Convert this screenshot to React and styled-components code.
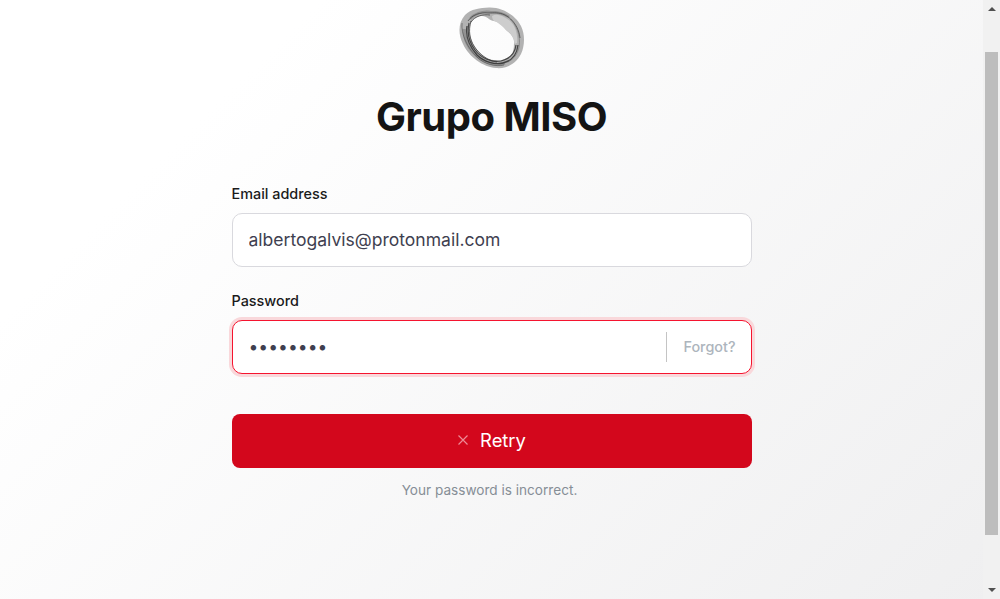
import React from 'react';
import styled, { createGlobalStyle } from 'styled-components';

const GlobalStyle = createGlobalStyle`
  html, body {
    margin: 0;
    padding: 0;
    height: 100%;
    overflow: hidden;
  }
  body {
    font-family: Inter, "Liberation Sans", sans-serif;
  }
`;

function Logo() {
  return (
    <LogoSvg viewBox="0 0 66 62" width="66" height="62" fill="none">
      <path
        fillRule="evenodd"
        fill="#b2b2b2"
        d="M30 0.5 C44 0 57 9 62 19 C66 27 66 38 62 47 C57 57 47 62 37 61 C24 60 10 50 4 37 C-1 27 -1 16 6 8 C12 2 21 1 30 0.5 Z
           M12 16 C15 11 19 9 23 9 C28 9 31 14 35 14 C41 15 45 20 47 23 C52 27 56 31 55 36 C55 42 54 46 52 48 C48 52 42 54 37 53 C31 53 26 51 23 48 C18 44 15 39 13 34 C10 27 10 21 12 16 Z"
      />
      <path fill="#cdcdcd" d="M33 9 C38 6 44 9 50 13 C56 18 59 26 58 36 L55.5 37 C55 31 52 26 47 23 C43 19 39 15 35 14 C34 13 33 11 33 9 Z" />
      <path stroke="#555" strokeWidth="3" opacity="0.35" d="M5 22 C5 32 10 42 18 49 C26 56 37 59 46 56" />
      <path stroke="#444" strokeWidth="2.5" opacity="0.3" d="M11 12 C15 7 23 4 31 5 C38 5 44 6 50 10" />
      <path stroke="#2b2b2b" strokeWidth="1.3" opacity="0.8" d="M8 19 C6 30 11 40 18 48 C25 55 36 58 44 56 C53 54 58 47 59 38" />
      <path stroke="#2b2b2b" strokeWidth="1.2" opacity="0.8" d="M10 16 C8 25 10 35 16 43 C22 51 33 56 42 54 C50 52 56 47 57 38" />
      <path stroke="#3a3a3a" strokeWidth="1" opacity="0.75" d="M12 14 C9 24 11 33 15 39 C20 47 29 54 38 55" />
      <path stroke="#3c3c3c" strokeWidth="1" opacity="0.7" d="M9 14 C13 8 21 5 29 6 C35 6 40 5 46 8 C54 12 60 21 61 31" />
      <path stroke="#444" strokeWidth="1" opacity="0.75" d="M12 15 C16 9 24 7 31 8" />
      <path stroke="#555" strokeWidth="1" opacity="0.65" d="M3 16 C2 27 8 41 19 51 C26 57 36 60 45 58" />
      <path stroke="#666" strokeWidth="1" opacity="0.55" d="M51 12 C57 17 62 28 60 40 C59 46 55 52 49 55" />
    </LogoSvg>
  );
}

function RetryIcon() {
  return (
    <svg width="10" height="10" viewBox="0 0 10 10" fill="none" stroke="#ee8a96" strokeWidth="1.2">
      <path d="M0.5 0.5 L9.5 9.5 M9.5 0.5 L0.5 9.5" />
    </svg>
  );
}

export default function App() {
  return (
    <Page>
      <GlobalStyle />
      <Main>
        <Logo />
        <Title>Grupo MISO</Title>
        <Form onSubmit={(e) => e.preventDefault()}>
          <Field>
            <Label>Email address</Label>
            <InputBox>
              <Input type="email" defaultValue="albertogalvis@protonmail.com" />
            </InputBox>
          </Field>
          <Field>
            <Label>Password</Label>
            <InputBox $error>
              <Input type="password" defaultValue="12345678" />
              <Forgot>Forgot?</Forgot>
            </InputBox>
          </Field>
          <RetryButton type="submit">
            <RetryIcon />
            Retry
          </RetryButton>
          <ErrorText>Your password is incorrect.</ErrorText>
        </Form>
      </Main>
      <ScrollBar>
        <ArrowUp />
        <Thumb />
        <ArrowDown />
      </ScrollBar>
    </Page>
  );
}

const Page = styled.div`
  display: flex;
  width: 100%;
  height: 100vh;
  overflow: hidden;
  background: linear-gradient(135deg, #ffffff 20%, #efeff0 100%);
`;

const Main = styled.main`
  flex: 1;
  display: flex;
  flex-direction: column;
  align-items: center;
  padding-top: 7px;
`;

const LogoSvg = styled.svg`
  display: block;
  flex-shrink: 0;
  overflow: visible;
  filter: blur(0.4px);
`;

const Title = styled.h1`
  margin: 20px 0 0;
  font-size: 40px;
  line-height: 56px;
  font-weight: 700;
  letter-spacing: -0.5px;
  color: #141414;
`;

const Form = styled.form`
  width: 520px;
  margin-top: 39px;
  display: flex;
  flex-direction: column;
`;

const Field = styled.div`
  display: flex;
  flex-direction: column;
  margin-bottom: 24px;
`;

const Label = styled.label`
  font-size: 14.4px;
  line-height: 20px;
  font-weight: 500;
  color: #1a1a1a;
  margin-bottom: 9px;
`;

const InputBox = styled.div`
  box-sizing: border-box;
  height: 54px;
  display: flex;
  align-items: center;
  background: #ffffff;
  border-radius: 10px;
  border: ${(p) => (p.$error ? '1.5px solid #f5142f' : '1px solid #d9d9de')};
  box-shadow: ${(p) => (p.$error ? '0 0 0 3px #f9d8db' : 'none')};
`;

const Input = styled.input`
  flex: 1;
  min-width: 0;
  height: 100%;
  box-sizing: border-box;
  padding: 0 16px 2px;
  border: none;
  outline: none;
  background: transparent;
  border-radius: 10px;
  font-family: Inter, "Liberation Sans", sans-serif;
  font-size: 17.55px;
  color: #3f3f50;
`;

const Forgot = styled.span`
  flex-shrink: 0;
  height: 30px;
  line-height: 30px;
  padding: 0 15px 0 16px;
  border-left: 1px solid #c4c4c4;
  font-size: 14.4px;
  font-weight: 500;
  color: #adb5bd;
`;

const RetryButton = styled.button`
  height: 54px;
  margin-top: 16px;
  padding: 0 0 2px 1px;
  display: flex;
  align-items: center;
  justify-content: center;
  gap: 12px;
  border: none;
  border-radius: 8px;
  background: #d3071c;
  color: #ffffff;
  font-family: Inter, "Liberation Sans", sans-serif;
  font-size: 18.4px;
  font-weight: 400;
`;

const ErrorText = styled.p`
  margin: 12px 0 0;
  padding-right: 4px;
  text-align: center;
  font-size: 13.6px;
  line-height: 20px;
  color: #868e96;
`;

const ScrollBar = styled.div`
  width: 17px;
  flex-shrink: 0;
  display: flex;
  flex-direction: column;
  align-items: center;
  justify-content: space-between;
  background: #f1f1f1;
  padding: 7px 0;
  box-sizing: border-box;
`;

const ArrowUp = styled.div`
  width: 0;
  height: 0;
  border-left: 4px solid transparent;
  border-right: 4px solid transparent;
  border-bottom: 4px solid #505050;
`;

const ArrowDown = styled(ArrowUp)`
  border-bottom: none;
  border-top: 4px solid #505050;
`;

const Thumb = styled.div`
  width: 13px;
  height: 483px;
  margin-top: 35px;
  margin-bottom: 47px;
  background: #bdbdbd;
`;
